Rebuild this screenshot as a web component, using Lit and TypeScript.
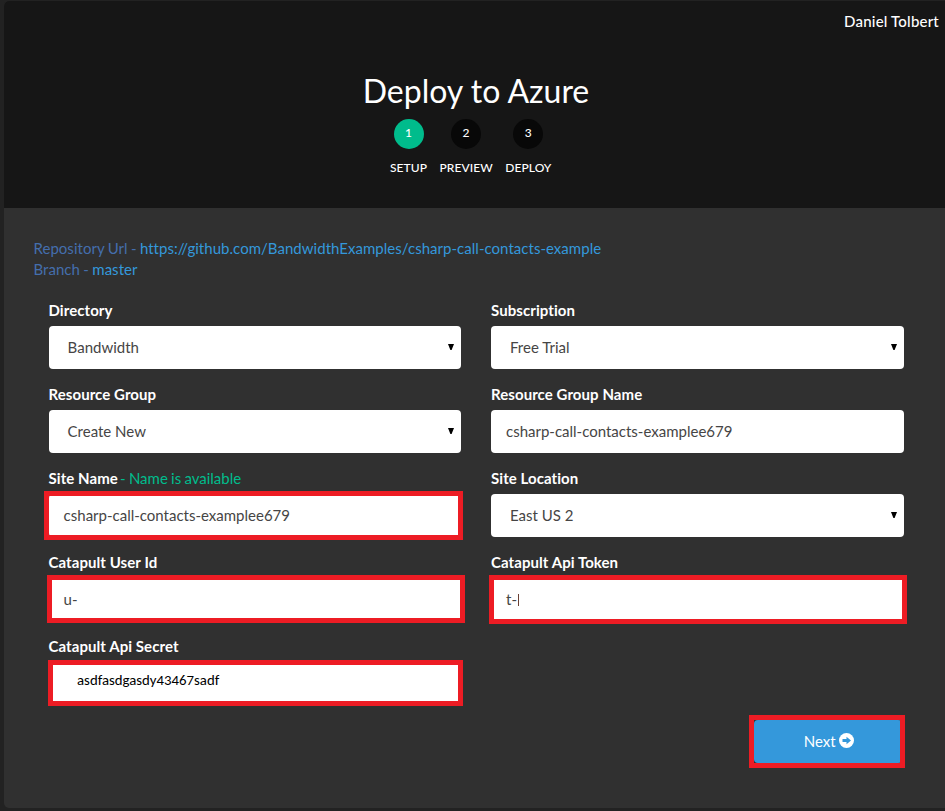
import { LitElement, html, css, nothing } from "lit";
import { customElement } from "lit/decorators.js";

type Field = {
  label: string;
  value: string;
  kind: "select" | "input" | "secret";
  note?: string;
  mark?: string;
  caret?: boolean;
};

const FIELDS: Field[] = [
  { label: "Directory", value: "Bandwidth", kind: "select" },
  { label: "Subscription", value: "Free Trial", kind: "select" },
  { label: "Resource Group", value: "Create New", kind: "select" },
  { label: "Resource Group Name", value: "csharp-call-contacts-examplee679", kind: "input" },
  { label: "Site Name", note: "- Name is available", value: "csharp-call-contacts-examplee679", kind: "input", mark: "mark-site" },
  { label: "Site Location", value: "East US 2", kind: "select" },
  { label: "Catapult User Id", value: "u-", kind: "input", mark: "mark-user" },
  { label: "Catapult Api Token", value: "t-", kind: "input", mark: "mark-token", caret: true },
  { label: "Catapult Api Secret", value: "asdfasdgasdy43467sadf", kind: "secret", mark: "mark-secret" },
];

const STEPS = ["SETUP", "PREVIEW", "DEPLOY"];

@customElement("app-root")
export class AppRoot extends LitElement {
  static styles = css`
    :host {
      display: block;
      box-sizing: border-box;
      height: 811px;
      overflow: hidden;
      padding: 1px 0 3px 4px;
      background: #222;
      color: #fff;
      font: 15px/21px Lato, "Liberation Sans", sans-serif;
      font-variant-ligatures: none;
    }
    * { box-sizing: border-box; }
    .panel {
      display: flex;
      flex-direction: column;
      height: 807px;
      background: #303030;
      border-radius: 5px 0 0 5px;
      overflow: hidden;
    }
    .header {
      flex: none;
      display: flex;
      flex-direction: column;
      height: 207px;
      background: #161616;
    }
    .user {
      align-self: flex-end;
      margin: 10px 6px 0 0;
      font-weight: 500;
      letter-spacing: 0.2px;
    }
    .title {
      margin: 38px 0 0;
      width: 944px;
      text-align: center;
      font-size: 32px;
      line-height: 42px;
      font-weight: 400;
    }
    .steps {
      display: flex;
      justify-content: center;
      gap: 12.5px;
      margin: 7px 7.5px 0 0;
      font-size: 12px;
      font-weight: 500;
      letter-spacing: 0.07px;
    }
    .step {
      display: flex;
      flex-direction: column;
      align-items: center;
      gap: 10px;
      line-height: 17px;
    }
    .dot {
      width: 30px;
      height: 30px;
      border-radius: 50%;
      background: #080808;
      text-align: center;
      line-height: 28px;
    }
    .dot.active { background: #00bc8c; }
    .source {
      margin: 30px 0 0 29.5px;
      color: #446ead;
      word-spacing: -0.5px;
      letter-spacing: 0.03px;
    }
    .link { color: #3498db; }
    .form {
      display: grid;
      grid-template-columns: 412px 413px;
      column-gap: 30px;
      row-gap: 15px;
      margin: 20px 0 0 45px;
    }
    .label { font-weight: 700; margin: 0 0 5px -0.5px; letter-spacing: 0.07px; }
    .cell:nth-child(even) .label { margin-left: 0; }
    .note { font-weight: 400; color: #00bc8c; word-spacing: -0.6px; margin-left: -1.5px; letter-spacing: 0; }
    .control {
      position: relative;
      display: flex;
      align-items: center;
      height: 43px;
      padding: 0 15px;
      border-radius: 4px;
      background: #fff;
      color: #464545;
    }
    .select { padding: 0 7px 0 19px; justify-content: space-between; }
    .cell:nth-child(odd) .control span { margin-left: -0.4px; }
    .secret {
      padding: 0 28.4px 8px;
      color: #000;
      font: 14.8px/18px Carlito, Lato, sans-serif;
    }
    .arrow { width: 6px; height: 6px; margin-bottom: 2px; }
    .caret { width: 1px; height: 12px; background: #6b4034; margin-left: 1px; }
    .mark {
      position: absolute;
      border: 5px solid #ed1c24;
      pointer-events: none;
    }
    .mark-site { inset: -3px -2px -3px -5px; }
    .mark-user { inset: -3px -4px -2px -2px; }
    .mark-token { inset: -3px -3px -3px -2px; }
    .mark-secret { inset: -2px -2px -1px -1px; }
    .next {
      position: relative;
      align-self: flex-end;
      display: flex;
      align-items: center;
      justify-content: center;
      gap: 3px;
      width: 148px;
      height: 43px;
      margin: 15px 43px 0 0;
      padding-left: 1.5px;
      border-radius: 4px;
      background: #3498db;
    }
    .mark-next { inset: -5px -3px -5px -5px; }
    .icon { width: 15px; height: 15px; margin-top: -2px; }
  `;

  private field(f: Field) {
    return html`<div class="cell">
      <div class="label">${f.label}${f.note ? html` <span class="note">${f.note}</span>` : nothing}</div>
      <div class="control ${f.kind}">
        <span>${f.value}</span>
        ${f.caret ? html`<span class="caret"></span>` : nothing}
        ${f.kind === "select"
          ? html`<svg class="arrow" viewBox="0 0 6 6"><path d="M0 0H6L3.6 6H2.4Z" fill="#000" /></svg>`
          : nothing}
        ${f.mark ? html`<div class="mark ${f.mark}"></div>` : nothing}
      </div>
    </div>`;
  }

  render() {
    return html`<div class="panel">
      <div class="header">
        <div class="user">Daniel Tolbert</div>
        <h1 class="title">Deploy to Azure</h1>
        <div class="steps">
          ${STEPS.map(
            (s, i) => html`<div class="step">
              <div class="dot ${i === 0 ? "active" : ""}">${i + 1}</div>
              <div>${s}</div>
            </div>`
          )}
        </div>
      </div>
      <div class="source">
        <div>Repository Url - <span class="link">https://github.com/BandwidthExamples/csharp-call-contacts-example</span></div>
        <div>Branch - <span class="link">master</span></div>
      </div>
      <div class="form">${FIELDS.map((f) => this.field(f))}</div>
      <div class="next">
        <span>Next</span>
        <svg class="icon" viewBox="0 0 15 15">
          <circle cx="7.5" cy="7.5" r="7.5" fill="#fff" />
          <path d="M3.5 6H7.5V3.8L12 7.5L7.5 11.2V9H3.5Z" fill="#3498db" />
        </svg>
        <div class="mark mark-next"></div>
      </div>
    </div>`;
  }
}
